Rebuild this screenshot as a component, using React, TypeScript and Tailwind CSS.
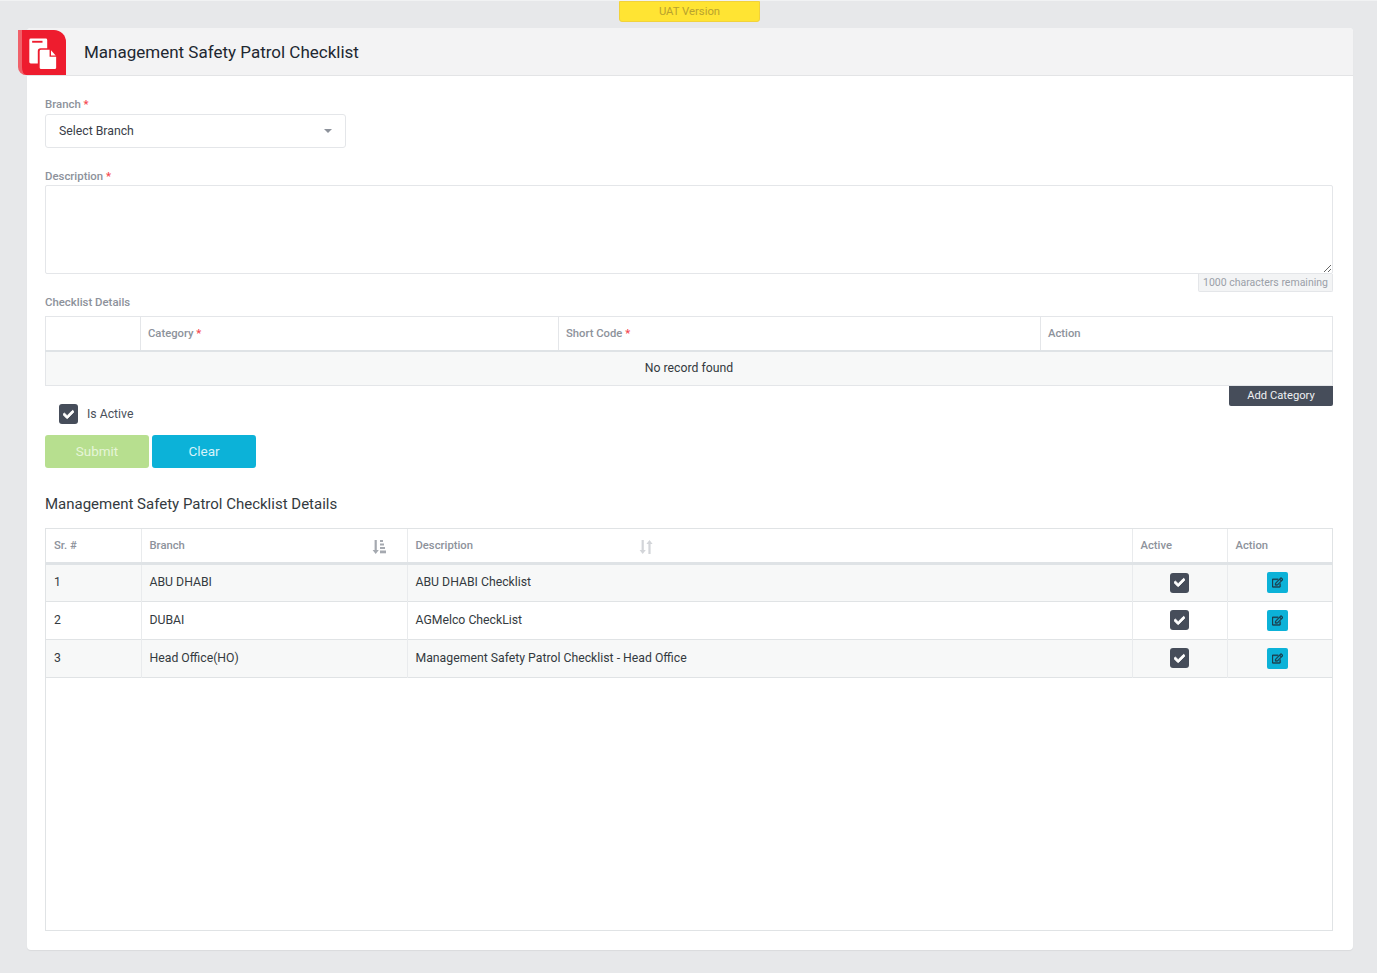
import { FaCheck, FaRegEdit } from "react-icons/fa";

const rows = [
  { id: 1, branch: "ABU DHABI", desc: "ABU DHABI Checklist" },
  { id: 2, branch: "DUBAI", desc: "AGMelco CheckList" },
  { id: 3, branch: "Head Office(HO)", desc: "Management Safety Patrol Checklist - Head Office" },
];

function Req() {
  return <span className="text-[#f5484f]"> *</span>;
}

function CheckBox() {
  return (
    <span className="flex h-[20px] w-[19px] items-center justify-center rounded-[3px] bg-[#464d5a] text-white">
      <FaCheck className="h-[11px] w-[11px] stroke-white stroke-[40]" />
    </span>
  );
}

function SortAlpha() {
  return (
    <svg width="14" height="16" viewBox="0 0 14 16" className="text-[#a5a9b0]" fill="currentColor">
      <path d="M2.600 1h2.200v10h2L3.700 15 .6 11h2z" />
      <rect x="8" y="1" width="3" height="2" />
      <rect x="8" y="4.500" width="4" height="2" />
      <rect x="8" y="8" width="5" height="2" />
      <rect x="8" y="11.500" width="6" height="2.800" />
    </svg>
  );
}

function SortBoth() {
  return (
    <svg width="14" height="16" viewBox="0 0 14 16" className="text-[#d3d5d9]" fill="currentColor">
      <path d="M2.600 1h2.200v10h2L3.700 15 .6 11h2z" />
      <path d="M9.400 15h2.200V5h2L10.500 1 7.400 5h2z" />
    </svg>
  );
}

export default function App() {
  return (
    <div
      className="flex h-[973px] flex-col border-t border-[#f1f2f3] bg-[#e7e8ea] pb-[23px] pl-[27px] pr-[24px] text-[12.25px] text-[#343a40]"
      style={{ fontFamily: "Roboto, 'Liberation Sans', sans-serif" }}
    >
      <div className="flex h-[27px] shrink-0 justify-center pr-px">
        <div className="flex h-[21px] w-[141px] items-center justify-center rounded-b-[3px] border border-[#f2d23a] bg-[#ffe433] pt-px text-[11.3px] text-[#b9a22e]">
          UAT Version
        </div>
      </div>

      <div className="relative flex min-h-0 flex-1 flex-col rounded-[4px] bg-white shadow-[0_1px_1px_rgba(0,0,0,0.06)]">
        <div className="absolute left-[-9px] top-[2px] flex h-[45px] w-[48px] items-center justify-center rounded-tr-[12px] rounded-bl-[8px] border-l-[4px] border-[#f0616a] bg-[#ee1c2e]">
          <svg width="31" height="32" viewBox="0 0 32 34" fill="white" className="mr-[3px] mt-[3px]">
            <path d="M2 2a1.500 1.500 0 0 1 1.500-1.500h16A1.500 1.500 0 0 1 21 2v9H14a3 3 0 0 0-3 3v13H3.500A1.500 1.500 0 0 1 2 25.500z" />
            <rect x="5" y="3" width="11" height="2" fill="#ee1c2e" />
            <path d="M13 14a1.500 1.500 0 0 1 1.500-1.500h9V20h7v11.500a1.500 1.500 0 0 1-1.500 1.500H14.500a1.500 1.500 0 0 1-1.500-1.500z" />
            <path d="M25 13l5 5.500h-5z" />
          </svg>
        </div>

        <div className="flex h-[48px] shrink-0 items-center rounded-t-[4px] border-b border-[#e3e4e6] bg-[#f3f3f4] pl-[57px] pt-[3px]">
          <h1 className="text-[17px] font-normal text-[#212730]">Management Safety Patrol Checklist</h1>
        </div>

        <div className="flex min-h-0 flex-1 flex-col pb-[19px] pl-[18px] pr-[20px] pt-[21px]">
          <label className="mb-[3px] h-[14px] text-[11.4px] font-medium leading-[15px] text-[#8d929b]">
            Branch
            <Req />
          </label>
          <div className="flex h-[34px] w-[301px] items-center justify-between rounded-[3px] border border-[#e4e6e9] pl-[13px] pr-[13px] text-[#3a4049]">
            <span>Select Branch</span>
            <span className="h-0 w-0 border-x-[4px] border-t-[4px] border-x-transparent border-t-[#8d929b]" />
          </div>

          <label className="mb-[2px] mt-[21px] h-[14px] text-[11.4px] font-medium leading-[14px] text-[#8d929b]">
            Description
            <Req />
          </label>
          <textarea className="block h-[89px] w-full shrink-0 rounded-[2px] border border-[#e4e6e9] outline-none" />
          <div className="flex justify-end">
            <span className="h-[18px] w-[135px] rounded-b-[2px] border border-t-0 border-[#e4e6e9] bg-[#f3f4f5] text-center text-[10.5px] leading-[17px] text-[#9a9fa8]">
              1000 characters remaining
            </span>
          </div>

          <div className="mb-[7px] mt-[3px] h-[14px] text-[11.4px] font-medium leading-[14px] text-[#8d929b]">
            Checklist Details
          </div>
          <table className="w-full table-fixed border-collapse border border-[#e4e6e9]">
            <colgroup>
              <col className="w-[95px]" />
              <col className="w-[418px]" />
              <col className="w-[482px]" />
              <col />
            </colgroup>
            <thead>
              <tr className="h-[34px] border-b-2 border-[#dfe3e6] text-left text-[11.25px] text-[#8d929b]">
                <th className="border-r border-[#e4e6e9]" />
                <th className="border-r border-[#e4e6e9] pl-[7px] pt-[2px] font-medium">
                  Category
                  <Req />
                </th>
                <th className="border-r border-[#e4e6e9] pl-[7px] pt-[2px] font-medium">
                  Short Code
                  <Req />
                </th>
                <th className="pl-[7px] pt-[2px] font-medium">Action</th>
              </tr>
            </thead>
            <tbody>
              <tr className="h-[35px] bg-[#f7f8f8]">
                <td colSpan={4} className="text-center text-[#343a40]">
                  No record found
                </td>
              </tr>
            </tbody>
          </table>

          <div className="flex justify-end">
            <button className="h-[20px] w-[104px] rounded-b-[2px] bg-[#464d5a] text-center text-[11.2px] text-[#eef0f2]">
              Add Category
            </button>
          </div>

          <div className="-mt-[2px] flex h-[20px] items-center pl-[14px]">
            <CheckBox />
            <span className="ml-[9px] text-[#4a505a]">Is Active</span>
          </div>

          <div className="mt-[11px] flex gap-[3px]">
            <button className="h-[33px] w-[104px] rounded-[3px] bg-[#b7df8f] text-[13.5px] text-[#e6f5d8]">Submit</button>
            <button className="h-[33px] w-[104px] rounded-[3px] bg-[#0cb2d8] text-[13.5px] text-[#d5f3fa]">Clear</button>
          </div>

          <h2 className="mb-[14px] mt-[27px] h-[19px] text-[15px] font-normal leading-[19px] text-[#343a40]">
            Management Safety Patrol Checklist Details
          </h2>

          <div className="min-h-0 flex-1 border border-[#e0e3e5]">
            <table className="w-full table-fixed border-collapse">
              <colgroup>
                <col className="w-[95px]" />
                <col className="w-[266px]" />
                <col className="w-[725px]" />
                <col className="w-[95px]" />
                <col />
              </colgroup>
              <thead>
                <tr className="h-[34px] border-b-[3px] border-[#dfe3e6] text-left text-[11.25px] text-[#8d929b]">
                  <th className="border-r border-[#e9ebed] pl-[8px] pt-[3px] font-medium">Sr. #</th>
                  <th className="border-r border-[#e9ebed] pl-[8px] pr-[21px] pt-[3px] font-medium">
                    <div className="flex items-center justify-between">
                      Branch
                      <SortAlpha />
                    </div>
                  </th>
                  <th className="border-r border-[#e9ebed] pl-[8px] pt-[3px] font-medium">
                    <div className="flex w-[237px] items-center justify-between">
                      Description
                      <SortBoth />
                    </div>
                  </th>
                  <th className="border-r border-[#e9ebed] pl-[8px] pt-[3px] font-medium">Active</th>
                  <th className="pl-[8px] pt-[3px] font-medium">Action</th>
                </tr>
              </thead>
              <tbody>
                {rows.map((r, i) => (
                  <tr key={r.id} className={`h-[38px] border-b border-[#e0e3e5] ${i === 1 ? "bg-white" : "bg-[#f7f8f8]"}`}>
                    <td className="border-r border-[#e9ebed] pl-[8px]">{r.id}</td>
                    <td className="border-r border-[#e9ebed] pl-[8px]">{r.branch}</td>
                    <td className="border-r border-[#e9ebed] pl-[8px]">{r.desc}</td>
                    <td className="border-r border-[#e9ebed]">
                      <div className="flex justify-center">
                        <CheckBox />
                      </div>
                    </td>
                    <td className="pr-[5px]">
                      <div className="flex justify-center">
                        <span className="flex h-[21px] w-[21px] items-center justify-center rounded-[2px] bg-[#0cb2d8] text-[#1f3a48]">
                          <FaRegEdit className="h-[11px] w-[11px] stroke-[#1f3a48] stroke-[20]" />
                        </span>
                      </div>
                    </td>
                  </tr>
                ))}
              </tbody>
            </table>
          </div>
        </div>
      </div>
    </div>
  );
}
